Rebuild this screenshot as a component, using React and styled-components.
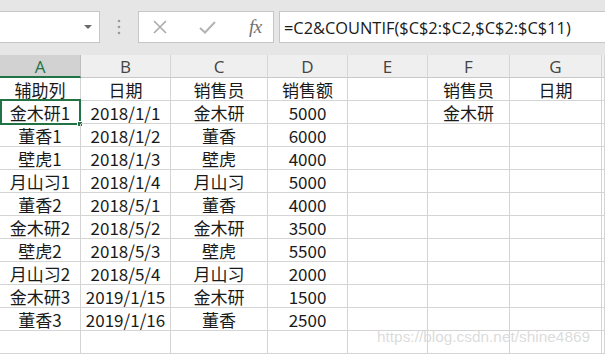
import React from "react";
import styled, { createGlobalStyle } from "styled-components";

const Global = createGlobalStyle`
  html, body { margin: 0; padding: 0; background: #ffffff; overflow: hidden; }
  * { box-sizing: border-box; }
`;

const Page = styled.div`
  width: 605px;
  height: 354px;
  overflow: hidden;
  position: relative;
  background: #fff;
`;

const Toolbar = styled.div`
  height: 55px;
  background: #e6e6e6;
  display: flex;
  align-items: flex-start;
  padding-top: 11px;
`;

const NameBox = styled.div`
  width: 100px;
  height: 32px;
  background: #fff;
  border: 1px solid #c6c6c6;
  border-left: none;
  display: flex;
  align-items: center;
  justify-content: flex-end;
  padding-right: 7px;
`;

const Caret = styled.div`
  width: 0;
  height: 0;
  border-left: 4px solid transparent;
  border-right: 4px solid transparent;
  border-top: 4px solid #6a6a6a;
`;

const Grip = styled.div`
  width: 38px;
  height: 32px;
  display: flex;
  align-items: center;
  justify-content: center;
`;

const FxBox = styled.div`
  width: 136px;
  height: 32px;
  background: #fff;
  border: 1px solid #c6c6c6;
  display: flex;
  align-items: center;
  padding-left: 14px;
`;

const IconSlot = styled.div`
  width: ${(p) => p.$w}px;
  height: 30px;
  display: flex;
  align-items: center;
  justify-content: flex-start;
`;

const FxText = styled.span`
  font-family: "Liberation Serif", "DejaVu Serif", serif;
  font-style: italic;
  font-size: 19px;
  color: #707070;
  letter-spacing: -0.5px;
  line-height: 1;
  margin-left: 4px;
  margin-top: -2px;
`;

const FormulaBox = styled.div`
  flex: 1;
  height: 32px;
  margin-left: 5px;
  background: #fff;
  border: 1px solid #c6c6c6;
  border-right: none;
  display: flex;
  align-items: center;
  padding-left: 4px;
  font-family: "Open Sans", "Noto Sans", sans-serif;
  font-size: 16.4px;
  color: #1a1a1a;
  white-space: nowrap;
  overflow: hidden;
`;

const Sheet = styled.div`
  display: grid;
  grid-template-columns: 81px 90px 97px 80px 80px 82px 92px 1fr;
  grid-auto-rows: 23px;
`;

const ColHead = styled.div`
  height: 23px;
  background: ${(p) => (p.$active ? "#d2d2d2" : "#efefef")};
  border-right: 1px solid ${(p) => (p.$active ? "#bdbdbd" : "#d5d5d5")};
  border-bottom: ${(p) => (p.$active ? "2px solid #217346" : "1px solid #c8c8c8")};
  display: flex;
  align-items: center;
  justify-content: center;
  font-family: "Open Sans", "Noto Sans", sans-serif;
  font-size: 17px;
  color: ${(p) => (p.$active ? "#217346" : "#444")};
  padding-top: ${(p) => (p.$active ? "1px" : "0")};
`;

const Cell = styled.div`
  position: relative;
  height: 23px;
  border-right: 1px solid #d4d4d4;
  border-bottom: 1px solid #d4d4d4;
  display: flex;
  align-items: center;
  justify-content: center;
  font-family: "Noto Sans CJK SC", "Noto Sans", sans-serif;
  font-size: 17px;
  color: #1a1a1a;
  white-space: nowrap;
  line-height: 1;
  padding-top: 1px;
`;

const SelectFrame = styled.div`
  position: absolute;
  left: 0;
  top: -2px;
  right: -1px;
  bottom: -2px;
  border: 2px solid #217346;
  pointer-events: none;
`;

const Handle = styled.div`
  position: absolute;
  right: -4px;
  bottom: -4px;
  width: 6px;
  height: 6px;
  background: #217346;
  border: 1px solid #fff;
`;

const Watermark = styled.div`
  position: absolute;
  left: 377px;
  top: 328px;
  font-family: "Liberation Sans", Arial, sans-serif;
  font-size: 15.4px;
  color: rgba(195, 195, 195, 0.6);
  text-shadow: 0 0 1px rgba(255, 255, 255, 0.9);
  white-space: nowrap;
  pointer-events: none;
`;

const cols = ["A", "B", "C", "D", "E", "F", "G", ""];

const rows = [
  ["辅助列", "日期", "销售员", "销售额", "", "销售员", "日期", ""],
  ["金木研1", "2018/1/1", "金木研", "5000", "", "金木研", "", ""],
  ["董香1", "2018/1/2", "董香", "6000", "", "", "", ""],
  ["壁虎1", "2018/1/3", "壁虎", "4000", "", "", "", ""],
  ["月山习1", "2018/1/4", "月山习", "5000", "", "", "", ""],
  ["董香2", "2018/5/1", "董香", "4000", "", "", "", ""],
  ["金木研2", "2018/5/2", "金木研", "3500", "", "", "", ""],
  ["壁虎2", "2018/5/3", "壁虎", "5500", "", "", "", ""],
  ["月山习2", "2018/5/4", "月山习", "2000", "", "", "", ""],
  ["金木研3", "2019/1/15", "金木研", "1500", "", "", "", ""],
  ["董香3", "2019/1/16", "董香", "2500", "", "", "", ""],
  ["", "", "", "", "", "", "", ""],
];

export default function App() {
  return (
    <Page>
      <Global />
      <Toolbar>
        <NameBox>
          <Caret />
        </NameBox>
        <Grip>
          <svg width="4" height="16" viewBox="0 0 4 16">
            <circle cx="2" cy="2" r="1.3" fill="#9a9a9a" />
            <circle cx="2" cy="8" r="1.3" fill="#9a9a9a" />
            <circle cx="2" cy="14" r="1.3" fill="#9a9a9a" />
          </svg>
        </Grip>
        <FxBox>
          <IconSlot $w={46}>
            <svg width="14" height="14" viewBox="0 0 14 14">
              <path d="M1 1 L13 13 M13 1 L1 13" stroke="#ababab" strokeWidth="1.6" fill="none" />
            </svg>
          </IconSlot>
          <IconSlot $w={46}>
            <svg width="17" height="13" viewBox="0 0 17 13">
              <path d="M1 7 L6 11.5 L16 1" stroke="#b3b3b3" strokeWidth="2" fill="none" />
            </svg>
          </IconSlot>
          <IconSlot $w={28}>
            <FxText>fx</FxText>
          </IconSlot>
        </FxBox>
        <FormulaBox>=C2&amp;COUNTIF($C$2:$C2,$C$2:$C$11)</FormulaBox>
      </Toolbar>
      <Sheet>
        {cols.map((c, i) => (
          <ColHead key={"h" + i} $active={c === "A"}>
            {c}
          </ColHead>
        ))}
        {rows.map((r, ri) =>
          r.map((v, ci) => (
            <Cell key={ri + "-" + ci}>
              {v}
              {ri === 1 && ci === 0 && (
                <SelectFrame>
                  <Handle />
                </SelectFrame>
              )}
            </Cell>
          ))
        )}
      </Sheet>
      <Watermark>https://blog.csdn.net/shine4869</Watermark>
    </Page>
  );
}
